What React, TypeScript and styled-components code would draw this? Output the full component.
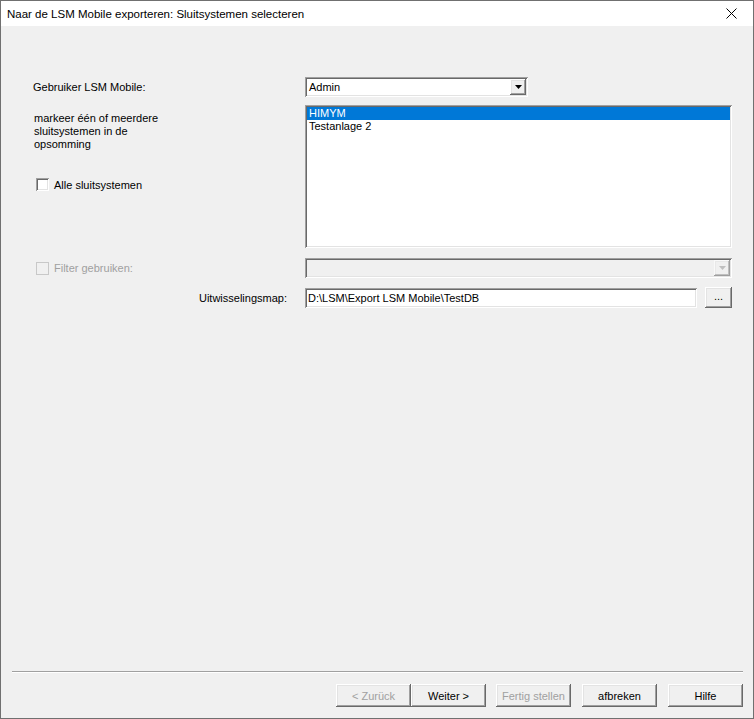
import styled, { createGlobalStyle } from 'styled-components'

const GlobalStyle = createGlobalStyle`
	html, body {
		margin: 0;
		padding: 0;
		background: #f0f0f0;
	}
	* {
		box-sizing: border-box;
	}
`

const raised = `
	box-shadow: inset -1px -1px #696969, inset 1px 1px #ffffff, inset -2px -2px #a0a0a0, inset 2px 2px #e3e3e3;
`

const sunken = `
	box-shadow: inset 1px 1px #a0a0a0, inset -1px -1px #ffffff, inset 2px 2px #696969, inset -2px -2px #e3e3e3;
`

function CloseIcon() {
	return (
		<svg width="11" height="11" viewBox="0 0 11 11">
			<path d="M0.5 0.5 L10.5 10.5 M10.5 0.5 L0.5 10.5" stroke="#000" strokeWidth="1" fill="none" />
		</svg>
	)
}

function ArrowDown({ disabled }: { disabled?: boolean }) {
	return (
		<svg width="7" height="4" viewBox="0 0 7 4">
			<path d="M0 0 H7 L3.5 4 Z" fill={disabled ? '#a0a0a0' : '#000'} />
		</svg>
	)
}

export default function App() {
	return (
		<>
			<GlobalStyle />
			<Window>
				<TitleBar>
					<Title>Naar de LSM Mobile exporteren: Sluitsystemen selecteren</Title>
					<CloseButton>
						<CloseIcon />
					</CloseButton>
				</TitleBar>

				<Body>
					<Row $top={51}>
						<LabelCell>
							<Label>Gebruiker LSM Mobile:</Label>
						</LabelCell>
						<Combo $width={223}>
							<ComboValue>Admin</ComboValue>
							<DropButton>
								<ArrowDown />
							</DropButton>
						</Combo>
					</Row>

					<Row $top={8}>
						<LeftStack>
							<Hint>
								markeer één of meerdere
								<br />
								sluitsystemen in de
								<br />
								opsomming
							</Hint>
							<CheckRow>
								<CheckBox />
								<Label>Alle sluitsystemen</Label>
							</CheckRow>
						</LeftStack>
						<ListBox>
							<ListItem $selected>HIMYM</ListItem>
							<ListItem>Testanlage 2</ListItem>
						</ListBox>
					</Row>

					<Row $top={10}>
						<LabelCell>
							<CheckRow>
								<CheckBox $disabled />
								<Label $disabled>Filter gebruiken:</Label>
							</CheckRow>
						</LabelCell>
						<Combo $width={427} $disabled>
							<ComboValue />
							<DropButton $disabled>
								<ArrowDown disabled />
							</DropButton>
						</Combo>
					</Row>

					<Row $top={9}>
						<LabelCell $right>
							<Label>Uitwisselingsmap:</Label>
						</LabelCell>
						<PathField>
							<TextInput>D:\LSM\Export LSM Mobile\TestDB</TextInput>
							<BrowseButton>...</BrowseButton>
						</PathField>
					</Row>
				</Body>

				<Footer>
					<Separator />
					<ButtonBar>
						<ButtonPair>
							<Button $disabled>&lt; Zurück</Button>
							<Button>Weiter &gt;</Button>
						</ButtonPair>
						<Button $disabled>Fertig stellen</Button>
						<Button>afbreken</Button>
						<Button>Hilfe</Button>
					</ButtonBar>
				</Footer>
			</Window>
		</>
	)
}

const Window = styled.div`
	width: 754px;
	height: 719px;
	border: 1px solid #707070;
	background: #f0f0f0;
	display: flex;
	flex-direction: column;
	font-family: 'Liberation Sans', Arial, sans-serif;
	font-size: 11px;
	color: #000;
`

const TitleBar = styled.div`
	height: 25px;
	background: #fff;
	display: flex;
	align-items: center;
	justify-content: space-between;
	padding-left: 6px;
`

const Title = styled.span`
	font-family: 'Liberation Sans', Arial, sans-serif;
	font-size: 11.5px;
	color: #000;
`

const CloseButton = styled.div`
	width: 46px;
	height: 100%;
	display: flex;
	align-items: center;
	justify-content: center;
	padding-left: 2px;
`

const Body = styled.div`
	flex: 1;
	display: flex;
	flex-direction: column;
	padding-left: 32px;
`

const Row = styled.div<{ $top: number }>`
	display: grid;
	grid-template-columns: 272px 427px;
	margin-top: ${(p) => p.$top}px;
`

const LabelCell = styled.div<{ $right?: boolean }>`
	display: flex;
	align-items: center;
	justify-content: ${(p) => (p.$right ? 'flex-end' : 'flex-start')};
	padding-right: ${(p) => (p.$right ? '18px' : '0')};
`

const Label = styled.span<{ $disabled?: boolean }>`
	color: ${(p) => (p.$disabled ? '#a0a0a0' : '#000')};
	white-space: nowrap;
`

const Combo = styled.div<{ $width: number; $disabled?: boolean }>`
	width: ${(p) => p.$width}px;
	height: 20px;
	background: ${(p) => (p.$disabled ? '#f0f0f0' : '#fff')};
	${sunken}
	display: flex;
	align-items: center;
	padding: 2px;
`

const ComboValue = styled.span`
	flex: 1;
	padding-left: 2px;
	line-height: 16px;
`

const DropButton = styled.div<{ $disabled?: boolean }>`
	width: 16px;
	height: 16px;
	background: #f0f0f0;
	${raised}
	display: flex;
	align-items: center;
	justify-content: center;
	opacity: ${(p) => (p.$disabled ? 0.6 : 1)};
`

const LeftStack = styled.div`
	display: flex;
	flex-direction: column;
	gap: 27px;
	padding-top: 7px;
`

const Hint = styled.div`
	line-height: 13px;
	padding-left: 1px;
`

const CheckRow = styled.div`
	display: flex;
	align-items: center;
	gap: 5px;
	padding-left: 3px;
`

const CheckBox = styled.span<{ $disabled?: boolean }>`
	width: 13px;
	height: 13px;
	flex-shrink: 0;
	background: ${(p) => (p.$disabled ? '#f0f0f0' : '#fff')};
	box-shadow: ${(p) =>
		p.$disabled
			? 'inset 0 0 0 1px #c8c8c8'
			: 'inset 1px 1px #a0a0a0, inset -1px -1px #ffffff, inset 2px 2px #696969, inset -2px -2px #e3e3e3'};
`

const ListBox = styled.div`
	height: 143px;
	background: #fff;
	${sunken}
	padding: 2px;
	display: flex;
	flex-direction: column;
`

const ListItem = styled.div<{ $selected?: boolean }>`
	height: 13px;
	line-height: 13px;
	padding-left: 2px;
	background: ${(p) => (p.$selected ? '#0078d7' : 'transparent')};
	color: ${(p) => (p.$selected ? '#fff' : '#000')};
`

const PathField = styled.div`
	display: flex;
	align-items: center;
	gap: 8px;
`

const TextInput = styled.div`
	width: 392px;
	height: 20px;
	background: #fff;
	${sunken}
	padding: 2px 3px;
	line-height: 16px;
	white-space: nowrap;
`

const BrowseButton = styled.div`
	width: 27px;
	height: 21px;
	background: #f0f0f0;
	${raised}
	display: flex;
	align-items: center;
	justify-content: center;
	padding-bottom: 3px;
`

const Footer = styled.div`
	height: 47px;
	display: flex;
	flex-direction: column;
	padding: 0 10px 0 11px;
`

const Separator = styled.div`
	height: 2px;
	border-top: 1px solid #a0a0a0;
	border-bottom: 1px solid #ffffff;
`

const ButtonBar = styled.div`
	margin-top: 11px;
	display: flex;
	justify-content: flex-end;
	gap: 11px;
`

const ButtonPair = styled.div`
	display: flex;
	margin-right: -1px;
`

const Button = styled.div<{ $disabled?: boolean }>`
	width: 75px;
	height: 23px;
	background: #f0f0f0;
	${raised}
	display: flex;
	align-items: center;
	justify-content: center;
	color: ${(p) => (p.$disabled ? '#a0a0a0' : '#000')};
	font-size: 11px;
`
